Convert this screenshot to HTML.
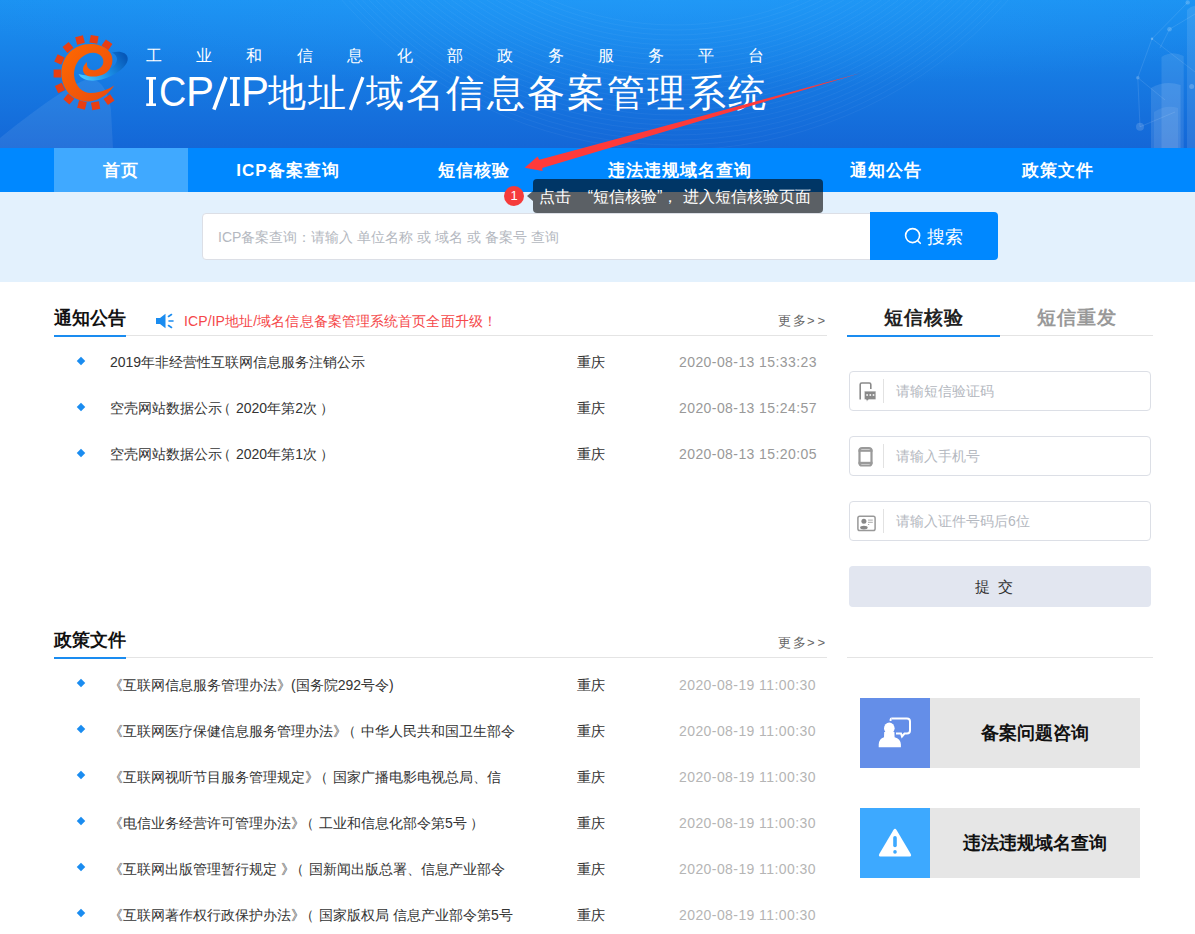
<!DOCTYPE html>
<html><head><meta charset="utf-8">
<style>
*{margin:0;padding:0;box-sizing:border-box}
html,body{width:1195px;height:934px;overflow:hidden;background:#fff;font-family:"Liberation Sans",sans-serif;color:#333}
.abs{position:absolute}
#hdr{position:absolute;left:0;top:0;width:1195px;height:148px;background:linear-gradient(180deg,#1a8ff0 0%,#1677e0 60%,#1466d6 100%);overflow:hidden}
#nav{position:absolute;left:0;top:148px;width:1195px;height:44px;background:#0088ff}
#nav .it{position:absolute;top:0;height:44px;line-height:46px;color:#fff;font-size:17px;font-weight:bold;text-align:center;letter-spacing:1px}
#band{position:absolute;left:0;top:192px;width:1195px;height:90px;background:#e3f1fd}
#sinput{position:absolute;left:202px;top:213px;width:670px;height:47px;background:#fff;border:1px solid #dcdfe6;border-radius:4px 0 0 4px;font-size:14px;color:#b4b8c0;line-height:46px;padding-left:15px}
#sbtn{position:absolute;left:870px;top:212px;width:128px;height:48px;background:#0088ff;border-radius:0 4px 4px 0;color:#fff;font-size:18px;line-height:48px}
.h2{position:absolute;font-size:18px;font-weight:bold;color:#111}
.hline{position:absolute;height:1px;background:#e4e4e4}
.uline{position:absolute;height:2px;background:#1a8cf0}
.more{position:absolute;font-size:13px;color:#666;letter-spacing:1.5px}
.row{position:absolute;left:0;width:840px;height:20px;font-size:14px;color:#333}
.row .d{position:absolute;left:78px;top:5px;width:6px;height:6px;background:#1a8cf0;transform:rotate(45deg)}
.lp{margin:0 5px 0 -5px}.rp{margin:0 -3px 0 3px}
.row .t{position:absolute;left:110px;top:1px;white-space:nowrap}
.row .c{position:absolute;left:577px;top:1px}
.row .dt{position:absolute;left:679px;top:1px;color:#999;letter-spacing:0.42px}
.row.p .t,.row.p .c,.row.p .dt{top:2px}
.row.p .t{left:109px}
.inp{position:absolute;left:849px;width:302px;height:40px;border:1px solid #dcdfe6;border-radius:4px;font-size:14px;color:#b4b8c0;line-height:38px}
.inp .sep{position:absolute;left:33px;top:7px;width:1px;height:24px;background:#e2e2e2}
.inp .ph{position:absolute;left:46px;top:0}
.box{position:absolute;left:860px;width:280px;height:70px;background:#e6e6e6}
.box .ic{position:absolute;left:0;top:0;width:70px;height:70px}
.box .tx{position:absolute;left:70px;top:0;width:210px;height:70px;line-height:70px;text-align:center;font-size:18px;font-weight:bold;color:#111}
</style></head><body>
<div id="hdr">
<svg class="abs" style="left:0;top:0" width="1195" height="148" viewBox="0 0 1195 148">
  <defs>
    <linearGradient id="hg" x1="0" y1="0" x2="0" y2="1">
      <stop offset="0" stop-color="#1b92f2"/><stop offset="0.55" stop-color="#1679e2"/><stop offset="1" stop-color="#1467d7"/>
    </linearGradient>
    <radialGradient id="glow" cx="0.55" cy="0" r="0.6">
      <stop offset="0" stop-color="#2aa4ff" stop-opacity="0.35"/><stop offset="1" stop-color="#2aa4ff" stop-opacity="0"/>
    </radialGradient>
  </defs>
  <rect width="1195" height="148" fill="url(#hg)"/>
  <rect width="1195" height="148" fill="url(#glow)"/>
  <path d="M0,148 L0,138 C20,122 60,90 85,80 C100,76 108,90 111,110 L113,148 Z" fill="#ffffff" fill-opacity="0.08"/>
  <g fill="#ffffff">
    <path d="M1187,10 Q1191,6 1195,6 L1195,148 L1187,148 Z" fill-opacity="0.1"/>
    <path d="M1161.5,57 Q1172,50 1183.7,56 L1183.7,148 L1161.5,148 Z" fill-opacity="0.1"/>
    <path d="M1151,88 Q1165,80 1180.6,85 L1180.6,148 L1151,148 Z" fill-opacity="0.11"/>
    <path d="M1154,112 Q1166,104 1178,108 L1178,148 L1154,148 Z" fill-opacity="0.08"/>
    <circle cx="1187.7" cy="2.4" r="2.2" fill-opacity="0.2"/>
    <circle cx="1169.5" cy="29.3" r="2.3" fill-opacity="0.2"/>
    <circle cx="1152" cy="38.8" r="1.2" fill-opacity="0.3"/>
    <circle cx="1137.8" cy="77.7" r="1.8" fill-opacity="0.2"/>
    <circle cx="1140" cy="126.8" r="4" fill-opacity="0.15"/>
    <circle cx="1191.7" cy="86.4" r="2.5" fill-opacity="0.2"/>
  </g>
  <g fill="none" stroke="#ffffff" stroke-opacity="0.18" stroke-width="0.6">
    <path d="M1187.7,2.4 L1152,38.8 L1137.8,77.7 L1140,126.8"/>
    <path d="M1152,38.8 L1195,72 M1169.5,29.3 L1195,14 M1137.8,77.7 L1165,100 M1140,126.8 L1175,112 M1169.5,29.3 L1160,48"/>
  </g>
  <g fill="none" stroke="#ffffff" stroke-opacity="0.06" stroke-width="0.8"><circle cx="675" cy="-295" r="320"/><circle cx="675" cy="-295" r="325"/><circle cx="675" cy="-295" r="330"/><circle cx="675" cy="-295" r="335"/><circle cx="675" cy="-295" r="340"/><circle cx="675" cy="-295" r="345"/><circle cx="675" cy="-295" r="350"/><circle cx="675" cy="-295" r="355"/><circle cx="675" cy="-295" r="360"/><circle cx="675" cy="-295" r="365"/><circle cx="675" cy="-295" r="370"/><circle cx="675" cy="-295" r="375"/><circle cx="675" cy="-295" r="380"/><circle cx="675" cy="-295" r="385"/><circle cx="675" cy="-295" r="390"/><circle cx="675" cy="-295" r="395"/><circle cx="675" cy="-295" r="400"/><circle cx="675" cy="-295" r="405"/><circle cx="675" cy="-295" r="410"/><circle cx="675" cy="-295" r="415"/><circle cx="675" cy="-295" r="420"/><circle cx="675" cy="-295" r="425"/><circle cx="675" cy="-295" r="430"/><circle cx="675" cy="-295" r="435"/><circle cx="675" cy="-295" r="440"/><circle cx="675" cy="-295" r="445"/></g>
</svg>
<div class="abs" style="left:146px;top:46px;font-size:16px;color:#fff;letter-spacing:34.2px;white-space:nowrap">工业和信息化部政务服务平台</div>
<div class="abs" style="left:159px;top:67px;font-size:42px;line-height:50px;color:#fff;white-space:nowrap;transform:scaleX(0.9);transform-origin:0 0">C</div>
<div class="abs" style="left:186px;top:67px;font-size:42px;line-height:50px;color:#fff;white-space:nowrap">P</div>
<div class="abs" style="left:241px;top:67px;font-size:42px;line-height:50px;color:#fff;white-space:nowrap">P</div>
<svg class="abs" style="left:0;top:0" width="400" height="148" viewBox="0 0 400 148" fill="#fff">
<rect x="149" y="77" width="4" height="29"/><rect x="146.2" y="77" width="9.8" height="2.6"/><rect x="146.2" y="103.4" width="9.8" height="2.6"/>
<rect x="232.9" y="77" width="4" height="29"/><rect x="230" y="77" width="9.8" height="2.6"/><rect x="230" y="103.4" width="9.8" height="2.6"/>
<path d="M213.9,109.6 L226,77" stroke="#fff" stroke-width="3.6"/>
<path d="M350.4,109.8 L362.9,77.1" stroke="#fff" stroke-width="3.4"/>
</svg>
<div class="abs" style="left:268px;top:68px;font-size:38px;line-height:50px;color:#fff;white-space:nowrap;letter-spacing:2px">地址</div>
<div class="abs" style="left:366px;top:68px;font-size:38px;line-height:50px;color:#fff;white-space:nowrap;letter-spacing:2.2px">域名信息备案管理系统</div>
<svg class="abs" style="left:40px;top:20px" width="160" height="100" viewBox="0 0 160 100">
  <defs>
    <linearGradient id="og" x1="0" y1="0" x2="1" y2="1"><stop offset="0" stop-color="#ff6a00"/><stop offset="1" stop-color="#e84a10"/></linearGradient>
    <linearGradient id="bg2" x1="0" y1="0.7" x2="1" y2="0.3"><stop offset="0" stop-color="#46c8ff"/><stop offset="0.5" stop-color="#1b8fe6"/><stop offset="1" stop-color="#0658b8"/></linearGradient>
  </defs>
  <g fill="#e83e12">
    <rect x="-4" y="-3.8" width="8" height="7.6" transform="translate(40,20) rotate(-15)"/>
    <rect x="-4" y="-3.8" width="8" height="7.6" transform="translate(54,19.4) rotate(10)"/>
    <rect x="-4" y="-3.8" width="8" height="7.6" transform="translate(67,24.8) rotate(35)"/>
    <rect x="-4" y="-3.8" width="8" height="7.6" transform="translate(28,27.4) rotate(-40)"/>
    <rect x="-4" y="-3.8" width="8" height="7.6" transform="translate(19.4,39.5) rotate(-65)"/>
    <rect x="-4" y="-3.8" width="8" height="7.6" transform="translate(17.4,53.5) rotate(-90)"/>
    <rect x="-4" y="-3.8" width="8" height="7.6" transform="translate(20,68) rotate(-115)"/>
    <rect x="-4" y="-3.8" width="8" height="7.6" transform="translate(28.8,79) rotate(-140)"/>
    <rect x="-4" y="-3.8" width="8" height="7.6" transform="translate(42,85) rotate(-165)"/>
    <rect x="-4" y="-3.8" width="8" height="7.6" transform="translate(55.6,85.7) rotate(170)"/>
    <rect x="-4" y="-3.8" width="8" height="7.6" transform="translate(69,79.7) rotate(145)"/>
  </g>
  <path d="M38.5,54 C43,62.5 58,62.5 71,56 C81,51 88.5,44 87.7,38 C87,32.5 80,30.5 72,32.5 C79,36 79,43 70,49 C60,55 48,57 38.5,54 Z" fill="url(#bg2)"/>
  <path d="M74.3,65.6 C66,78 54,82 47,81.5 C31,80.5 21,68 21.4,52 C22,36 34,24 50,24 C64,24 75,32 72,44 C69,55 57,58 48,56 C42,54 41,47 47,42 C46,48 50,51 56,50 C63,48 65,42 62,37 C58,32 52,32 47,34 C38,38 34,46 34,55 C35,66 42,73 51,73 C62,73 70,68 74.3,65.6 Z" fill="url(#og)"/>
</svg>
</div>
<div id="nav">
  <div class="it" style="left:54px;width:134px;background:#40a9ff">首页</div>
  <div class="it" style="left:188px;width:200px">ICP备案查询</div>
  <div class="it" style="left:388px;width:172px">短信核验</div>
  <div class="it" style="left:560px;width:240px">违法违规域名查询</div>
  <div class="it" style="left:800px;width:172px">通知公告</div>
  <div class="it" style="left:972px;width:172px">政策文件</div>
</div>
<div id="band"></div>
<div id="sinput">ICP备案查询：请输入 单位名称 或 域名 或 备案号 查询</div>
<div id="sbtn"><svg class="abs" style="left:33px;top:14px" width="20" height="20" viewBox="0 0 20 20"><circle cx="9.6" cy="9.6" r="7" fill="none" stroke="#fff" stroke-width="1.6"/><path d="M14.5,14.5 L17.3,17.3" stroke="#fff" stroke-width="1.6" stroke-linecap="round"/></svg><span class="abs" style="left:57px;top:1px">搜索</span></div>

<div class="h2" style="left:54px;top:306px">通知公告</div>
<div class="hline" style="left:54px;top:335px;width:773px"></div>
<div class="uline" style="left:54px;top:335px;width:72px"></div>
<svg class="abs" style="left:155px;top:313px" width="20" height="16" viewBox="0 0 20 16"><path d="M1,5 L5,5 L10.5,0.8 L10.5,15.2 L5,11 L1,11 Z" fill="#1a8cf0"/><path d="M13.5,3.5 L16.5,1.5 M14,8 L18,8 M13.5,12.5 L16.5,14.5" stroke="#1a8cf0" stroke-width="1.6" stroke-linecap="round"/></svg>
<div class="abs" style="left:184px;top:313px;font-size:14px;color:#f5484a;letter-spacing:0.1px">ICP/IP地址/域名信息备案管理系统首页全面升级！</div>
<div class="more" style="left:778px;top:312px">更多<span style="letter-spacing:3px">&gt;&gt;</span></div>

<div class="row" style="top:353px"><i class="d"></i><span class="t">2019年非经营性互联网信息服务注销公示</span><span class="c">重庆</span><span class="dt">2020-08-13 15:33:23</span></div>
<div class="row" style="top:399px"><i class="d"></i><span class="t">空壳网站数据公示<span class="lp">（</span>2020年第2次<span class="rp">）</span></span><span class="c">重庆</span><span class="dt">2020-08-13 15:24:57</span></div>
<div class="row" style="top:445px"><i class="d"></i><span class="t">空壳网站数据公示<span class="lp">（</span>2020年第1次<span class="rp">）</span></span><span class="c">重庆</span><span class="dt">2020-08-13 15:20:05</span></div>

<div class="h2" style="left:54px;top:628px">政策文件</div>
<div class="hline" style="left:54px;top:657px;width:773px"></div>
<div class="uline" style="left:54px;top:657px;width:72px"></div>
<div class="more" style="left:778px;top:634px">更多<span style="letter-spacing:3px">&gt;&gt;</span></div>

<div class="row p" style="top:675px"><i class="d"></i><span class="t">《互联网信息服务管理办法》(国务院292号令)</span><span class="c">重庆</span><span class="dt" style="color:#b5b5b5">2020-08-19 11:00:30</span></div>
<div class="row p" style="top:721px"><i class="d"></i><span class="t">《互联网医疗保健信息服务管理办法》<span class="lp">（</span>中华人民共和国卫生部令</span><span class="c">重庆</span><span class="dt" style="color:#b5b5b5">2020-08-19 11:00:30</span></div>
<div class="row p" style="top:767px"><i class="d"></i><span class="t">《互联网视听节目服务管理规定》<span class="lp">（</span>国家广播电影电视总局、信</span><span class="c">重庆</span><span class="dt" style="color:#b5b5b5">2020-08-19 11:00:30</span></div>
<div class="row p" style="top:813px"><i class="d"></i><span class="t">《电信业务经营许可管理办法》<span class="lp">（</span>工业和信息化部令第5号<span class="rp">）</span></span><span class="c">重庆</span><span class="dt" style="color:#b5b5b5">2020-08-19 11:00:30</span></div>
<div class="row p" style="top:859px"><i class="d"></i><span class="t">《互联网出版管理暂行规定 》<span class="lp">（</span>国新闻出版总署、信息产业部令</span><span class="c">重庆</span><span class="dt" style="color:#b5b5b5">2020-08-19 11:00:30</span></div>
<div class="row p" style="top:905px"><i class="d"></i><span class="t">《互联网著作权行政保护办法》<span class="lp">（</span>国家版权局 信息产业部令第5号</span><span class="c">重庆</span><span class="dt" style="color:#b5b5b5">2020-08-19 11:00:30</span></div>

<!-- right -->
<div class="abs" style="left:884px;top:305px;font-size:19px;font-weight:bold;color:#222;letter-spacing:1px">短信核验</div>
<div class="abs" style="left:1037px;top:305px;font-size:19px;font-weight:bold;color:#999;letter-spacing:1px">短信重发</div>
<div class="hline" style="left:847px;top:335px;width:306px"></div>
<div class="uline" style="left:847px;top:335px;width:153px"></div>

<div class="inp" style="top:371px"><svg class="abs" style="left:-1px;top:-1px" width="34" height="40" viewBox="849 371 34 40"><path d="M860.2,399.5 L860.2,384.5 Q860.2,383 861.7,383 L869.3,383 Q870.8,383 870.8,384.5 L870.8,389" fill="none" stroke="#8a8a8a" stroke-width="1.6"/><path d="M864.5,391 L875.5,391 Q876,391 876,391.5 L876,399 Q876,399.8 875.2,399.8 L868.5,399.8 L866.5,402 L866.2,399.8 L865,399.8 Q864.2,399.8 864.2,399 L864.2,391.5 Z" fill="#8a8a8a" stroke="#fff" stroke-width="0.8"/><rect x="866.3" y="394.2" width="1.6" height="1.6" fill="#fff"/><rect x="869.5" y="394.2" width="1.6" height="1.6" fill="#fff"/><rect x="872.7" y="394.2" width="1.6" height="1.6" fill="#fff"/></svg><span class="sep"></span><span class="ph">请输短信验证码</span></div>
<div class="inp" style="top:436px"><svg class="abs" style="left:-1px;top:-1px" width="34" height="40" viewBox="849 436 34 40"><rect x="859.5" y="448" width="12" height="17.5" rx="2.6" fill="none" stroke="#9a9a9a" stroke-width="2.2"/><rect x="858.5" y="449.5" width="14" height="2.3" fill="#9a9a9a"/><rect x="858.5" y="461.8" width="14" height="2.3" fill="#9a9a9a"/></svg><span class="sep"></span><span class="ph">请输入手机号</span></div>
<div class="inp" style="top:501px"><svg class="abs" style="left:-1px;top:-1px" width="34" height="40" viewBox="849 501 34 40"><rect x="857.9" y="516.3" width="17.2" height="14.2" rx="1.8" fill="none" stroke="#999" stroke-width="1.5"/><circle cx="863.9" cy="521.3" r="2.5" fill="#888"/><ellipse cx="863.9" cy="527.6" rx="3.8" ry="1.9" fill="#888"/><rect x="868" y="519.6" width="4.8" height="1" fill="#aaa"/><rect x="868" y="521.8" width="4.8" height="1" fill="#aaa"/><rect x="868" y="524" width="1.2" height="1" fill="#aaa"/></svg><span class="sep"></span><span class="ph">请输入证件号码后6位</span></div>
<div class="abs" style="left:849px;top:566px;width:302px;height:41px;background:#e2e6f0;border-radius:4px;text-align:center;line-height:41px;font-size:15px;color:#333;letter-spacing:8px;padding-right:5px">提交</div>
<div class="hline" style="left:847px;top:657px;width:306px"></div>

<div class="box" style="top:698px"><div class="ic" style="background:#648ee8"><svg width="70" height="70" viewBox="0 0 70 70"><path d="M31.5,20.5 L47,20.5 Q50,20.5 50,23.5 L50,32.5 Q50,35.5 47,35.5 L44.5,35.5 L42,38.5 L41,35.5 L36,35.5" fill="none" stroke="#fff" stroke-width="2"/><path d="M31.5,20.5 Q30.5,20.5 30.5,23" fill="none" stroke="#fff" stroke-width="2"/><ellipse cx="29.3" cy="30.3" rx="7" ry="7.5" fill="#648ee8"/><ellipse cx="29.3" cy="30.3" rx="5.3" ry="5.8" fill="#fff"/><path d="M24.2,34 L34.4,34 L34.6,39.2 Q40.6,40.6 40.9,46.5 L40.9,49.3 L18.7,49.3 L18.7,46.5 Q19,40.6 24,39.2 Z" fill="#fff"/></svg></div><div class="tx">备案问题咨询</div></div>
<div class="box" style="top:808px"><div class="ic" style="background:#3da9ff"><svg width="70" height="70" viewBox="0 0 70 70"><path d="M33.3,22.2 Q35,19.5 36.7,22.2 L50.6,45.8 Q52.2,48.6 49,48.6 L21,48.6 Q17.8,48.6 19.4,45.8 Z" fill="#fff"/><rect x="33.2" y="28" width="3.6" height="11.2" rx="1.8" fill="#3da9ff"/><circle cx="35" cy="43.9" r="1.8" fill="#3da9ff"/></svg></div><div class="tx">违法违规域名查询</div></div>

<!-- tooltip -->
<div class="abs" style="left:533px;top:179px;width:290px;height:34px;background:rgba(0,0,0,0.6);border-radius:4px;color:#fff;font-size:16px;line-height:36px;padding-left:6px;white-space:nowrap">点击<span style="display:inline-block;width:22px;text-align:right">“</span>短信核验<span style="display:inline-block;width:26px;text-align:left">”，</span>进入短信核验页面</div>
<div class="abs" style="left:527px;top:191px;width:0;height:0;border-top:5px solid transparent;border-bottom:5px solid transparent;border-right:6px solid rgba(0,0,0,0.6)"></div>
<div class="abs" style="left:504px;top:186px;width:20px;height:20px;border-radius:50%;background:#f53b3b;color:#fff;font-size:13px;text-align:center;line-height:20px">1</div>
<svg class="abs" style="left:0;top:0" width="1195" height="200" viewBox="0 0 1195 200">
  <path d="M861,73 L539.3,159.7 L537.6,156.4 L524.6,167.7 L542.6,171 L542.2,168 Z" fill="#fe3a3a"/>
</svg>
</body></html>
